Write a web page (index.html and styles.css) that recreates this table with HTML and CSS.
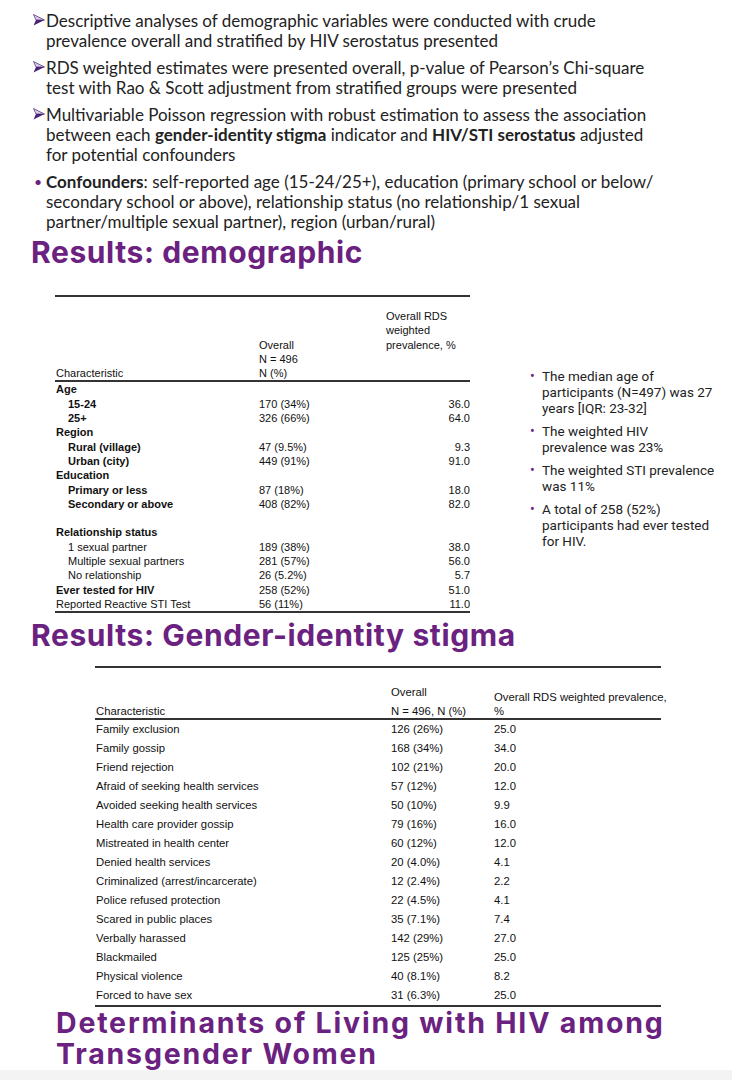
FILE: index.html
```html
<!DOCTYPE html>
<html lang="en">
<head>
  <meta charset="UTF-8" />
  <title>Results</title>
  <link rel="stylesheet" href="styles.css">
</head>
<body>

  <!-- Methods -->
  <ul class="methods">
    <li class="arrow">
      <svg class="arr" viewBox="0 0 12 12"><polygon points="0.5,0.5 11.5,6 3,6" fill="#d8cbe6" stroke="#5b3a84" stroke-width="0.8"/><polygon points="3,6 11.5,6 0.5,11.5" fill="#4a2175"/></svg>
      Descriptive analyses of demographic variables were conducted with crude prevalence overall and stratified by HIV serostatus presented
    </li>
    <li class="arrow">
      <svg class="arr" viewBox="0 0 12 12"><polygon points="0.5,0.5 11.5,6 3,6" fill="#d8cbe6" stroke="#5b3a84" stroke-width="0.8"/><polygon points="3,6 11.5,6 0.5,11.5" fill="#4a2175"/></svg>
      RDS weighted estimates were presented overall, p-value of Pearson’s Chi-square test with Rao &amp; Scott adjustment from stratified groups were presented
    </li>
    <li class="arrow">
      <svg class="arr" viewBox="0 0 12 12"><polygon points="0.5,0.5 11.5,6 3,6" fill="#d8cbe6" stroke="#5b3a84" stroke-width="0.8"/><polygon points="3,6 11.5,6 0.5,11.5" fill="#4a2175"/></svg>
      Multivariable Poisson regression with robust estimation to assess the association between each <b>gender-identity stigma</b> indicator and <b>HIV/STI serostatus</b> adjusted for potential confounders
    </li>
    <li class="dot"><b>Confounders</b>: self-reported age (15-24/25+), education (primary school or below/ secondary school or above), relationship status (no relationship/1 sexual partner/multiple sexual partner), region (urban/rural)</li>
  </ul>

  <h2 class="title first">Results: demographic</h2>

  <div class="demo">
    <table class="demo-table">
      <thead>
        <tr>
          <th class="c1">Characteristic</th>
          <th class="c2">Overall<br>N = 496<br>N (%)</th>
          <th class="c3">Overall RDS<br>weighted<br>prevalence, %<br>&nbsp;<br>&nbsp;</th>
        </tr>
      </thead>
      <tbody>
        <tr class="group"><td>Age</td><td></td><td></td></tr>
        <tr class="sub strong"><td>15-24</td><td>170 (34%)</td><td>36.0</td></tr>
        <tr class="sub strong"><td>25+</td><td>326 (66%)</td><td>64.0</td></tr>
        <tr class="group"><td>Region</td><td></td><td></td></tr>
        <tr class="sub strong"><td>Rural (village)</td><td>47 (9.5%)</td><td>9.3</td></tr>
        <tr class="sub strong"><td>Urban (city)</td><td>449 (91%)</td><td>91.0</td></tr>
        <tr class="group"><td>Education</td><td></td><td></td></tr>
        <tr class="sub strong"><td>Primary or less</td><td>87 (18%)</td><td>18.0</td></tr>
        <tr class="sub strong"><td>Secondary or above</td><td>408 (82%)</td><td>82.0</td></tr>
        <tr><td>&nbsp;</td><td></td><td></td></tr>
        <tr class="group"><td>Relationship status</td><td></td><td></td></tr>
        <tr class="sub"><td>1 sexual partner</td><td>189 (38%)</td><td>38.0</td></tr>
        <tr class="sub"><td>Multiple sexual partners</td><td>281 (57%)</td><td>56.0</td></tr>
        <tr class="sub"><td>No relationship</td><td>26 (5.2%)</td><td>5.7</td></tr>
        <tr class="group"><td>Ever tested for HIV</td><td>258 (52%)</td><td>51.0</td></tr>
        <tr class="last"><td>Reported Reactive STI Test</td><td>56 (11%)</td><td>11.0</td></tr>
      </tbody>
    </table>

    <ul class="summary">
      <li>The median age of participants (N=497) was 27 years [IQR: 23-32]</li>
      <li>The weighted HIV prevalence was 23%</li>
      <li>The weighted STI prevalence was 11%</li>
      <li>A total of 258 (52%) participants had ever tested for HIV.</li>
    </ul>
  </div>

  <h2 class="title second">Results: Gender-identity stigma</h2>

  <table class="stigma-table">
    <thead>
      <tr>
        <th class="c1">Characteristic</th>
        <th class="c2"><span class="top">Overall</span>N = 496, N (%)</th>
        <th class="c3">Overall RDS weighted prevalence,<br>%</th>
      </tr>
    </thead>
    <tbody>
      <tr><td>Family exclusion</td><td>126 (26%)</td><td>25.0</td></tr>
      <tr><td>Family gossip</td><td>168 (34%)</td><td>34.0</td></tr>
      <tr><td>Friend rejection</td><td>102 (21%)</td><td>20.0</td></tr>
      <tr><td>Afraid of seeking health services</td><td>57 (12%)</td><td>12.0</td></tr>
      <tr><td>Avoided seeking health services</td><td>50 (10%)</td><td>9.9</td></tr>
      <tr><td>Health care provider gossip</td><td>79 (16%)</td><td>16.0</td></tr>
      <tr><td>Mistreated in health center</td><td>60 (12%)</td><td>12.0</td></tr>
      <tr><td>Denied health services</td><td>20 (4.0%)</td><td>4.1</td></tr>
      <tr><td>Criminalized (arrest/incarcerate)</td><td>12 (2.4%)</td><td>2.2</td></tr>
      <tr><td>Police refused protection</td><td>22 (4.5%)</td><td>4.1</td></tr>
      <tr><td>Scared in public places</td><td>35 (7.1%)</td><td>7.4</td></tr>
      <tr><td>Verbally harassed</td><td>142 (29%)</td><td>27.0</td></tr>
      <tr><td>Blackmailed</td><td>125 (25%)</td><td>25.0</td></tr>
      <tr><td>Physical violence</td><td>40 (8.1%)</td><td>8.2</td></tr>
      <tr class="last"><td>Forced to have sex</td><td>31 (6.3%)</td><td>25.0</td></tr>
    </tbody>
  </table>

  <h2 class="title third">Determinants of Living with HIV among<br>Transgender Women</h2>

  <div class="band"></div>

</body>
</html>
```

FILE: styles.css
```css
body {
  margin: 0;
  padding: 0;
  background-color: #ffffff;
  color: #222;
  font-family: 'Lato', sans-serif;
  width: 732px;
  height: 1080px;
  overflow: hidden;
}

/* Methods list */
.methods {
  list-style: none;
  margin: 0;
  padding: 11px 78px 0 46px;
  font-size: 17px;
  line-height: 20px;
}

.methods li {
  position: relative;
  margin-bottom: 7px;
}

.methods .arr {
  position: absolute;
  left: -13px;
  top: 3px;
  width: 12px;
  height: 12px;
}

.methods li.dot::before {
  content: "\2022";
  position: absolute;
  left: -12px;
  top: 0;
  font-size: 14px;
  color: #6b2180;
}

/* Section titles */
.title {
  margin: 0;
  padding-left: 31px;
  font-family: 'Inter', sans-serif;
  font-weight: 700;
  font-size: 30px;
  line-height: 36px;
  letter-spacing: 0.6px;
  color: #6b2180;
}

.title.first {
  margin-top: -5px;
}

.title.second {
  margin-top: 4px;
}

.title.third {
  padding-left: 56px;
  font-size: 28.5px;
  line-height: 31px;
  letter-spacing: 1.8px;
  margin-top: 0;
}

/* Demographic table */
.demo {
  display: flex;
  align-items: flex-start;
  margin-top: 25px;
}

.demo-table {
  margin-left: 55px;
  width: 415px;
  table-layout: fixed;
  border-collapse: collapse;
  font-family: 'Liberation Sans', sans-serif;
  font-size: 11px;
  line-height: 14.3px;
  color: #111;
}

.demo-table thead tr {
  border-top: 2px solid #333;
  border-bottom: 2px solid #333;
}

.demo-table th {
  font-weight: normal;
  text-align: left;
  vertical-align: bottom;
  padding: 12px 0 0 0;
}

.demo-table .c1 { width: 203px; padding-left: 1px; }
.demo-table .c2 { width: 127px; }
.demo-table .c3 { width: 84px; }

.demo-table td {
  padding: 0;
  white-space: nowrap;
}

.demo-table td:first-child { padding-left: 1px; }
.demo-table td:last-child { text-align: right; }

.demo-table tr.group td:first-child { font-weight: bold; }
.demo-table tr.sub td:first-child { padding-left: 13px; }
.demo-table tr.strong td:first-child { font-weight: bold; }

.demo-table tr.last { border-bottom: 2px solid #333; }

/* Summary bullets */
.summary {
  margin: 73px 0 0 60px;
  padding: 0 0 0 12px;
  width: 173px;
  list-style: none;
  font-family: 'Roboto', sans-serif;
  font-size: 13.5px;
  line-height: 16px;
  color: #222;
}

.summary li {
  position: relative;
  margin-bottom: 7px;
}

.summary li::before {
  content: "\2022";
  position: absolute;
  left: -12px;
  color: #6b2180;
  font-size: 14px;
}

/* Stigma table */
.stigma-table {
  margin: 13px 0 0 95px;
  width: 566px;
  table-layout: fixed;
  border-collapse: collapse;
  font-family: 'Liberation Sans', sans-serif;
  font-size: 11.3px;
  color: #111;
}

.stigma-table thead tr {
  border-top: 2px solid #333;
  border-bottom: 2px solid #333;
}

.stigma-table th {
  font-weight: normal;
  text-align: left;
  vertical-align: bottom;
  line-height: 14px;
  padding: 0;
  height: 50px;
  white-space: nowrap;
}

.stigma-table th .top {
  display: block;
  margin-bottom: 5px;
}

.stigma-table .c1 { width: 295px; padding-left: 1px; }
.stigma-table .c2 { width: 103px; }
.stigma-table .c3 { width: 167px; }

.stigma-table td {
  padding: 0;
  height: 19px;
  line-height: 19px;
  white-space: nowrap;
}

.stigma-table td:first-child { padding-left: 1px; }

.stigma-table tr.last { border-bottom: 2px solid #333; }

/* bottom strip */
.band {
  position: absolute;
  left: 0;
  right: 0;
  top: 1070px;
  height: 10px;
  background-color: #f3f3f3;
}
```
